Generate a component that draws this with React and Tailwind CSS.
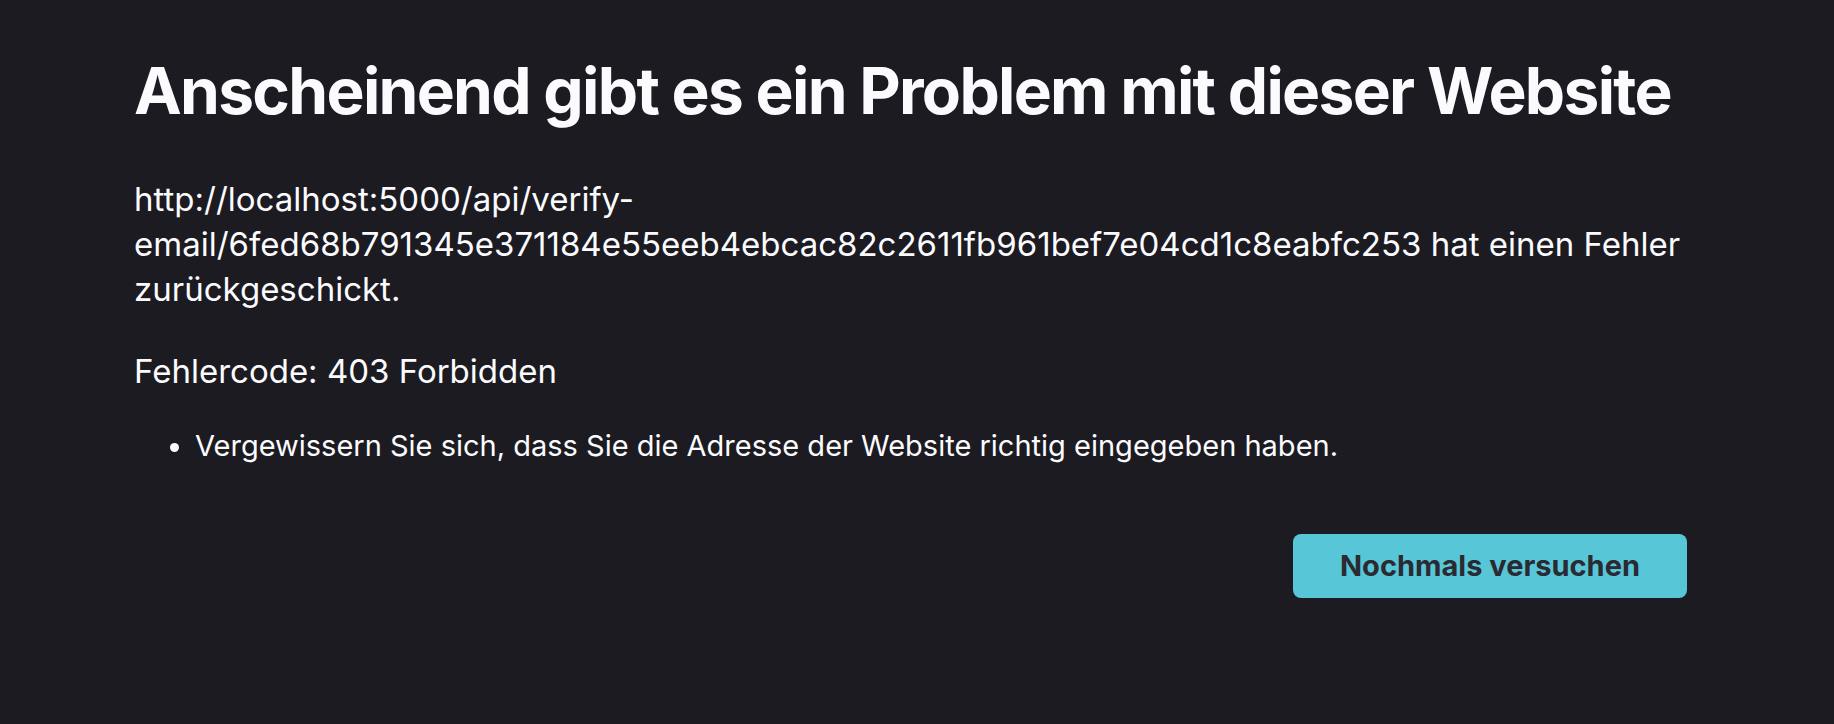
import React from 'react';

const App = () => {
  return (
    <div className="min-h-screen w-full bg-[#1c1b22] text-[#fbfbfe]" style={{ fontFamily: 'Inter, "Noto Sans", sans-serif' }}>
      <div className="w-[1553px] pl-[134px] pt-[52px] box-content">
        <h1 className="text-[64px] font-bold leading-[78px] tracking-[-1.7px] whitespace-nowrap">
          Anscheinend gibt es ein Problem mit dieser Website
        </h1>

        <p className="mt-[47px] text-[33px] leading-[45px]">
          http://localhost:5000/api/verify-email/6fed68b791345e371184e55eeb4ebcac82c2611fb961bef7e04cd1c8eabfc253 hat einen Fehler zurückgeschickt.
        </p>

        <p className="mt-[37px] text-[33px] leading-[45px]">Fehlercode: 403 Forbidden</p>

        <ul className="mt-[32px] list-disc pl-[61px] text-[29px] leading-[40px]">
          <li>Vergewissern Sie sich, dass Sie die Adresse der Website richtig eingegeben haben.</li>
        </ul>

        <div className="mt-[68px] flex justify-end">
          <button className="h-[64px] w-[394px] rounded-[8px] bg-[#57c7d8] text-[29px] font-bold text-[#2b2a33]">
            Nochmals versuchen
          </button>
        </div>
      </div>
    </div>
  );
};

export default App;
